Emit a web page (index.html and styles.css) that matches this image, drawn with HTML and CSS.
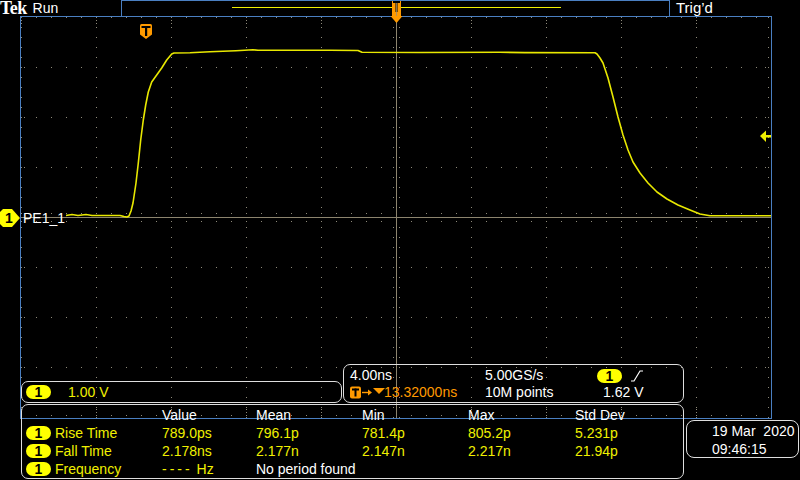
FILE: index.html
```html
<!DOCTYPE html>
<html lang="en">
<head>
<meta charset="utf-8">
<title>Tek Run</title>
<link rel="stylesheet" href="styles.css">
</head>
<body>
<div class="scope">
  <header class="topbar">
    <div class="brand"><span class="tek">Tek</span><span class="state">Run</span></div>
    <div class="record">
      <svg width="547" height="15" viewBox="0 0 547 15">
        <line x1="110" y1="6.5" x2="439" y2="6.5" stroke="#f0f000" stroke-width="1.2"/>
        <rect x="270" y="0" width="9" height="15" fill="#ff9a00"/>
        <rect x="271" y="0" width="7" height="2" fill="#000"/>
        <rect x="273.5" y="0" width="2" height="11" fill="#000"/>
        <line x1="274.5" y1="2" x2="274.5" y2="15" stroke="#9a8e78" stroke-width="0.8"/>
      </svg>
    </div>
    <div class="trig">Trig’d</div>
  </header>

  <div class="stage">
    <div class="gutter">
      <div class="chmark">1</div>
    </div>
    <svg class="graticule" width="752" height="403" viewBox="0 0 752 403">
      <g fill="none" stroke="#8e8a7a" stroke-width="1">
        <path stroke-dasharray="1 14" d="M1 1.5H752M1 51.5H752M1 101.5H752M1 151.5H752M1 251.5H752M1 301.5H752M1 351.5H752M1 399.5H752M1 197.5H752M1 205.5H752"/>
        <path stroke-dasharray="1 9" d="M1.5 1V402M76.5 1V402M151.5 1V402M226.5 1V402M301.5 1V402M451.5 1V402M526.5 1V402M601.5 1V402M676.5 1V402M748.5 1V402M373.5 1V402M379.5 1V402"/>
        <path stroke-dasharray="1 2" d="M1.5 1V8M76.5 1V8M151.5 1V8M226.5 1V8M301.5 1V8M451.5 1V8M526.5 1V8M601.5 1V8M676.5 1V8M1.5 393V401M76.5 393V401M151.5 393V401M226.5 393V401M301.5 393V401M451.5 393V401M526.5 393V401M601.5 393V401M676.5 393V401M1 51.5H7M1 101.5H7M1 151.5H7M1 251.5H7M1 301.5H7M1 351.5H7M745 51.5H750M745 101.5H750M745 151.5H750M745 251.5H750M745 301.5H750M745 351.5H750"/>
      </g>
      <path fill="none" stroke="#8c846e" stroke-width="1" d="M1 201.5H751M376.5 1V402"/>
      <polyline fill="none" stroke="#e8e800" stroke-width="1.6" stroke-linejoin="round"
        points="46,199.5 52,198.5 58,199.5 66,198.5 72,199.5 90,199.5 100,199.5 104,200.5 107,201 109,200 111,195 113,187 116,167 118.3,147 120.7,124 123.3,104 125.7,89 128.3,76 131.7,66 136.7,59 141.7,52 146.7,44 151.7,38 154,37 170,36.7 190,35.7 216,34.7 233,33.7 238,34.3 255,34.2 280,34.3 310,34.3 338,34.5 342,36.3 400,36.5 480,36.3 505,36.6 575,36.8 577,38 580,42 583,47 588,62 593,81 598,101 603,119 608,134 613,146 620,157 628,167 637,176 647,183 658,189 670,194 680,198 690,199.8 751,199.8"/>
      <rect x="0.5" y="0.5" width="751" height="402" fill="none" stroke="#4a7fc1" stroke-width="1"/>
      <path d="M121.5 8H130.5Q132 8 132 9.5V18.5L126 23L120 18.5V9.5Q120 8 121.5 8Z" fill="#ff9a00"/>
      <rect x="121.5" y="10" width="9" height="2" fill="#000"/>
      <rect x="125" y="10" width="2.2" height="10" fill="#000"/>
      <path d="M370.5 0H382.5L376.5 7Z" fill="#ff9a00"/>
      <path d="M740 120L746 114.5V119H751V121.5H746V126Z" fill="#f0f000"/>
      <text x="3" y="206.5" class="trace-label">PE1_1</text>
    </svg>
  </div>

  <div class="hud">
    <div class="box chbox">
      <span class="pill">1</span>
      <span class="chval">1.00 V</span>
    </div>

    <div class="box hbox">
      <span>4.00ns</span>
      <span>5.00GS/s</span>
      <span class="trigsrc"><span class="pill">1</span>
        <svg class="slope" width="14" height="12" viewBox="0 0 14 12"><polyline points="1,11 4,11 10,1 13,1" fill="none" stroke="#fff" stroke-width="1.2"/></svg>
      </span>
      <span class="delay">
        <svg width="35" height="13" viewBox="0 0 35 13">
          <rect x="0" y="0.5" width="11" height="12" rx="2" fill="#ff9a00"/>
          <rect x="2" y="2.5" width="7" height="2" fill="#000"/>
          <rect x="4.5" y="2.5" width="2" height="8" fill="#000"/>
          <path d="M12 6.5H19" stroke="#ff9a00" stroke-width="1.4"/>
          <path d="M18 3.5L22 6.5L18 9.5Z" fill="#ff9a00"/>
          <path d="M23 2H35L29 8Z" fill="#ff9a00"/>
        </svg>13.32000ns</span>
      <span>10M points</span>
      <span class="level">1.62 V</span>
    </div>

    <div class="box meas">
      <span></span><span class="hd">Value</span><span class="hd">Mean</span><span class="hd">Min</span><span class="hd">Max</span><span class="hd">Std Dev</span>

      <span class="lbl"><span class="pill">1</span>Rise Time</span>
      <span>789.0ps</span><span>796.1p</span><span>781.4p</span><span>805.2p</span><span>5.231p</span>

      <span class="lbl"><span class="pill">1</span>Fall Time</span>
      <span>2.178ns</span><span>2.177n</span><span>2.147n</span><span>2.217n</span><span>21.94p</span>

      <span class="lbl"><span class="pill">1</span>Frequency</span>
      <span><span class="dashes">----</span> Hz</span><span class="np">No period found</span><span></span><span></span><span></span>
    </div>

    <div class="box date">
      <span>19 Mar&nbsp; 2020</span>
      <span>09:46:15</span>
    </div>
  </div>
</div>
</body>
</html>
```

FILE: styles.css
```css
* {
  box-sizing: border-box;
  margin: 0;
  padding: 0;
}

body {
  background: #000;
  width: 800px;
  height: 480px;
  overflow: hidden;
  font-family: "Liberation Sans", Arial, sans-serif;
  font-size: 14px;
  color: #fff;
}

.scope {
  position: relative;
  width: 800px;
  height: 480px;
  background: #000;
}

/* ---------- top bar ---------- */
.topbar {
  display: flex;
  height: 16px;
}

.brand {
  width: 121px;
  display: flex;
  line-height: 16px;
}

.tek {
  font-family: "Liberation Serif", "Times New Roman", serif;
  font-weight: bold;
  font-size: 18px;
  letter-spacing: -0.6px;
  line-height: 16px;
}

.state {
  margin-left: 6px;
  font-size: 14px;
}

.record {
  width: 549px;
  height: 16px;
  border: 1px solid #4a7fc1;
  border-bottom: none;
}

.record svg {
  display: block;
}

.trig {
  padding-left: 6px;
  font-size: 15px;
  line-height: 16px;
}

/* ---------- display area ---------- */
.stage {
  display: flex;
}

.gutter {
  width: 20px;
  padding-top: 193px;
}

.chmark {
  width: 20px;
  height: 18px;
  background: #ffff00;
  color: #000;
  font-weight: bold;
  font-size: 14px;
  line-height: 18px;
  padding-left: 5px;
  clip-path: polygon(3px 0, 12px 0, 20px 9px, 12px 18px, 3px 18px, 0 15px, 0 3px);
}

.graticule {
  display: block;
}

.trace-label {
  font-family: "Liberation Sans", Arial, sans-serif;
  font-size: 14px;
  fill: #fff;
}

/* ---------- overlay readouts ---------- */
.hud {
  position: absolute;
  left: 21px;
  top: 364px;
  display: grid;
  grid-template-columns: 321px 1px 341px 2px 113px;
  grid-template-rows: 17px 22px 1px 75px;
}

.box {
  border: 1px solid #dedede;
  border-radius: 7px;
}

.pill {
  display: inline-flex;
  align-items: center;
  justify-content: center;
  width: 25px;
  height: 14px;
  border-radius: 7px;
  background: #ffff00;
  color: #000;
  font-weight: bold;
  font-size: 14px;
  line-height: 14px;
  flex: none;
}

.chbox {
  grid-column: 1;
  grid-row: 2;
  display: flex;
  align-items: center;
  padding-left: 4px;
}

.chval {
  margin-left: 17px;
  color: #f0f000;
  line-height: 18px;
}

.hbox {
  grid-column: 3;
  grid-row: 1 / 3;
  display: grid;
  grid-template-columns: 135px 112px auto;
  grid-auto-rows: 17px;
  padding: 2px 0 0 6px;
  line-height: 17px;
  white-space: nowrap;
}

.trigsrc {
  display: flex;
  align-items: center;
  gap: 8px;
}

.delay {
  display: flex;
  align-items: center;
  color: #ff9a00;
}

.delay svg {
  display: block;
  margin-right: -1px;
}

.level {
  padding-left: 6px;
}

.meas {
  grid-column: 1 / 4;
  grid-row: 4;
  display: grid;
  grid-template-columns: 140px 94px 106px 106px 107px auto;
  grid-auto-rows: 18px;
  padding-top: 1px;
  line-height: 18px;
  color: #f0f000;
  white-space: nowrap;
}

.meas .hd {
  color: #fff;
}

.meas .np {
  color: #fff;
}

.dashes {
  letter-spacing: 3px;
}

.lbl {
  display: flex;
  align-items: center;
  gap: 4px;
  padding-left: 4px;
}

.date {
  grid-column: 5;
  grid-row: 3 / 5;
  align-self: start;
  margin-top: 17px;
  height: 38px;
  border-radius: 8px;
  display: flex;
  flex-direction: column;
  padding: 1px 0 0 25px;
  line-height: 18px;
  white-space: nowrap;
}
```
